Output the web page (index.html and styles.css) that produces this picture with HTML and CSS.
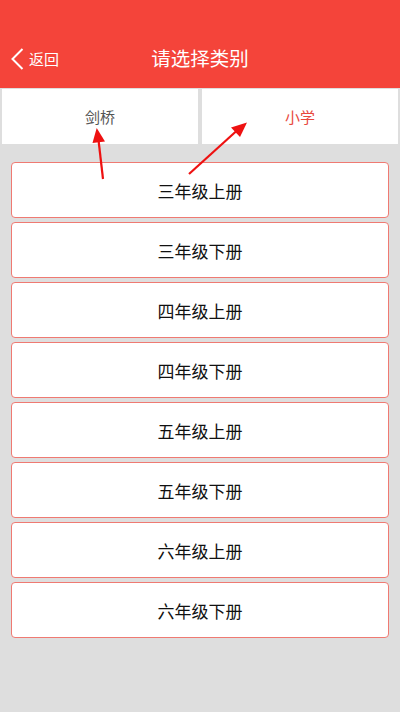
FILE: index.html
```html
<!DOCTYPE html>
<html lang="zh">
<head>
<meta charset="utf-8">
<link rel="stylesheet" href="styles.css">
</head>
<body>
<div class="page">
  <header class="header">
    <div class="bar">
      <div class="back">
        <svg class="chev" width="14" height="24" viewBox="0 0 14 24"><path d="M12.5 2 L2.5 12 L12.5 22" fill="none" stroke="#fff" stroke-width="2"/></svg>
        <span>返回</span>
      </div>
      <div class="title">请选择类别</div>
    </div>
  </header>
  <div class="tabs">
    <div class="tab">剑桥</div>
    <div class="tab active">小学</div>
  </div>
  <div class="list">
    <div class="item">三年级上册</div>
    <div class="item">三年级下册</div>
    <div class="item">四年级上册</div>
    <div class="item">四年级下册</div>
    <div class="item">五年级上册</div>
    <div class="item">五年级下册</div>
    <div class="item">六年级上册</div>
    <div class="item">六年级下册</div>
  </div>
  <svg class="arrows" width="400" height="712" viewBox="0 0 400 712">
    <line x1="103" y1="179" x2="98.5" y2="140" stroke="#ee1111" stroke-width="2.2"/>
    <polygon points="96.7,128 92.5,143 105,141.5" fill="#ee1111"/>
    <line x1="189" y1="174" x2="237" y2="130.5" stroke="#ee1111" stroke-width="2.2"/>
    <polygon points="247,122.5 231,127.5 240,137" fill="#ee1111"/>
  </svg>
</div>
</body>
</html>
```

FILE: styles.css
```css
html, body {
  margin: 0;
  padding: 0;
}
body {
  background: #dedede;
  font-family: "Noto Sans CJK SC", "Noto Sans", sans-serif;
}
.page {
  position: relative;
  width: 400px;
  height: 712px;
  overflow: hidden;
  background: #dedede;
}
.header {
  background: #f4443a;
  height: 88px;
  padding-top: 28px;
  box-sizing: border-box;
}
.bar {
  position: relative;
  height: 60px;
  display: flex;
  align-items: center;
  justify-content: center;
}
.back {
  position: absolute;
  left: 10px;
  top: 0;
  height: 60px;
  display: flex;
  align-items: center;
  gap: 5px;
  color: #fff;
  font-size: 15px;
}
.chev {
  display: block;
  margin-top: 1px;
}
.title {
  color: #fff;
  font-size: 19.5px;
  line-height: 1;
}
.tabs {
  display: flex;
  gap: 4px;
  padding: 1px 2px 0;
}
.tab {
  flex: 1;
  height: 55px;
  background: #fff;
  display: flex;
  align-items: center;
  justify-content: center;
  font-size: 15px;
  color: #555;
}
.tab.active {
  color: #e8483d;
}
.list {
  display: flex;
  flex-direction: column;
  gap: 4px;
  padding: 18px 11px 0;
}
.item {
  height: 56px;
  box-sizing: border-box;
  background: #fff;
  border: 1px solid #ef7a72;
  border-radius: 4px;
  display: flex;
  align-items: center;
  justify-content: center;
  font-size: 17px;
  color: #111;
}
.arrows {
  position: absolute;
  left: 0;
  top: 0;
  pointer-events: none;
}
```
